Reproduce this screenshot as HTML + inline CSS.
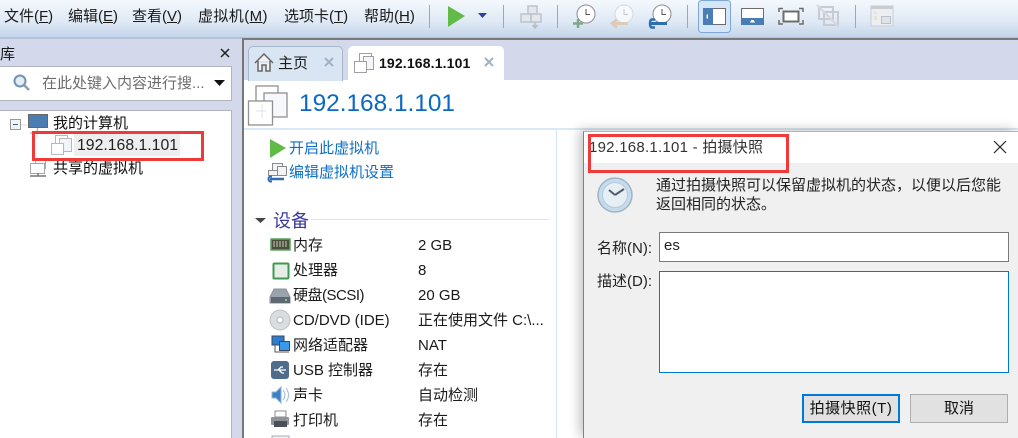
<!DOCTYPE html>
<html><head><meta charset="utf-8">
<style>
html,body{margin:0;padding:0;width:1018px;height:438px;overflow:hidden;background:#d3d9eb}
body{position:relative;font-family:"Liberation Sans","Noto Sans CJK SC",sans-serif;font-size:15px;color:#1a1a1a}
.a{position:absolute;white-space:nowrap;line-height:20px}
.b{position:absolute;box-sizing:border-box}
svg{position:absolute;overflow:visible}
u{text-decoration:underline}
.lnk{color:#0f6fc6}
</style></head><body>
<div class="b" style="left:0;top:0;width:1018px;height:37px;background:linear-gradient(#f4f8fd,#dfe9f5 60%,#c3d4ea)"></div>
<div class="b" style="left:0;top:37px;width:1018px;height:2px;background:#b4c3da"></div>
<div class="b" style="left:243px;top:38px;width:775px;height:2px;background:#7a7a7a"></div>

<span class="a" style="left:4px;top:7px">文件(<u>F</u>)</span>
<span class="a" style="left:68px;top:7px">编辑(<u>E</u>)</span>
<span class="a" style="left:132px;top:7px">查看(<u>V</u>)</span>
<span class="a" style="left:198px;top:7px;letter-spacing:.4px">虚拟机(<u>M</u>)</span>
<span class="a" style="left:284px;top:7px">选项卡(<u>T</u>)</span>
<span class="a" style="left:364px;top:7px">帮助(<u>H</u>)</span>

<!-- toolbar -->
<svg style="left:0;top:0" width="1018" height="38">
<g fill="#8fa9c9"><rect x="429" y="5" width="1" height="23"/><rect x="503" y="5" width="1" height="23"/><rect x="557" y="5" width="1" height="23"/><rect x="687" y="5" width="1" height="23"/><rect x="855" y="5" width="1" height="23"/></g>
<path d="M448 6 L465 16 L448 27Z" fill="#62bb46"/>
<path d="M478 13h9l-4.500 5z" fill="#2b3fa8"/>
<g fill="#e4e8ee" stroke="#bcc3cc" stroke-width="1.500"><rect x="528" y="6" width="9" height="8"/><rect x="521" y="14" width="10" height="8"/><rect x="531" y="14" width="10" height="8"/></g>
<path d="M535 22v5M532.500 25l2.500 3 2.500-3" stroke="#b5bbc4" stroke-width="1.500" fill="none"/>
<g fill="#fff"><circle cx="586" cy="14" r="9"/><circle cx="624" cy="14" r="9" opacity=".6"/><circle cx="662" cy="14" r="9"/></g>
<g fill="none" stroke="#8b8b8b" stroke-width="1"><circle cx="586" cy="14" r="9"/><circle cx="662" cy="14" r="9"/><path d="M586 9v5.500h4M662 9v5.500h4" stroke="#555"/></g>
<g fill="none" stroke="#d5d8dc" stroke-width="1"><circle cx="624" cy="14" r="9"/><path d="M624 9v5.500h4" stroke="#c2c5ca"/></g>
<path d="M578 19v9M573 23.500h10" stroke="#7ea58d" stroke-width="2.500"/>
<path d="M612 23.500h16M617 19.500l-5 4 5 4" fill="none" stroke="#dccbb9" stroke-width="3"/>
<path d="M651 23.500h16" stroke="#2f6fb0" stroke-width="3"/>
<path d="M655 19.500h-3.500c-2 1-2 7 0 8h3.500" fill="none" stroke="#2f6fb0" stroke-width="2.500"/>
<rect x="698.500" y="0.500" width="32" height="32" rx="3" fill="#d5e6f8" stroke="#7fa7d6"/>
<rect x="703.500" y="8.500" width="22" height="16" fill="#fff" stroke="#6c6c6c"/>
<rect x="703" y="8" width="10" height="17" fill="#4a7db3"/>
<path d="M708 14v5l-1.500-1v-3z" fill="#fff"/>
<rect x="741.500" y="8.500" width="22" height="16" fill="#fff" stroke="#6c6c6c"/>
<rect x="741" y="18" width="23" height="7" fill="#4a7db3"/>
<path d="M750 22.500h5v-1h-1v-1.500h-3v1.500h-1z" fill="#fff"/>
<rect x="783.500" y="11.500" width="15" height="10" fill="#fff" stroke="#6c6c6c" stroke-width="2"/>
<path d="M779 12V8.500h4M799 8.500h4V12M779 20v4h4M799 24h4v-4" fill="none" stroke="#6c6c6c" stroke-width="1.500"/>
<g fill="none" stroke="#c8ccd2" stroke-width="2"><rect x="819" y="7" width="14" height="12"/><rect x="824" y="12" width="14" height="13"/></g>
<path d="M817 5l22 22" stroke="#d5d8dd" stroke-width="2"/>
<rect x="871" y="6" width="22" height="20" fill="#eceef2" stroke="#c9cdd3" stroke-width="1"/>
<rect x="871" y="6" width="22" height="3" fill="#c9cdd3"/>
<rect x="881.500" y="16.500" width="9" height="7" fill="#dfe4ea" stroke="#b9c0c9"/>
<path d="M874 13h3M874 17h3M874 19h3" stroke="#e0dcb8" stroke-width="1"/>
</svg>

<!-- library -->
<span class="a" style="left:0;top:45px">库</span>
<svg style="left:0;top:0" width="240" height="120">
<path d="M221 49l8 8M229 49l-8 8" stroke="#222" stroke-width="1.500"/>
</svg>
<div class="b" style="left:0;top:66px;width:232px;height:35px;background:#fff;border:1px solid #b0b4bc;border-left:0"></div>
<svg style="left:0;top:0" width="240" height="105">
<circle cx="20" cy="81" r="5.500" fill="#e4edf6" stroke="#6f93b6" stroke-width="2"/>
<path d="M24 85l5 5" stroke="#8d9aa8" stroke-width="2.500"/>
<path d="M214 80h11l-5.500 6z" fill="#111"/>
</svg>
<span class="a" style="left:42px;top:74px;color:#6d6d6d">在此处键入内容进行搜...</span>
<div class="b" style="left:0;top:110px;width:232px;height:328px;background:#fff;border:1px solid #b0b4bc;border-left:0;border-bottom:0"></div>

<svg style="left:0;top:0" width="240" height="200">
<rect x="10.500" y="119.500" width="10" height="10" fill="#f2f4f7" stroke="#999"/>
<path d="M13 124.500h5" stroke="#3b5e8c"/>
<rect x="28.500" y="114.500" width="19" height="13" fill="#4b7db3" stroke="#666"/>
<path d="M37.500 128v5M30 133h15" stroke="#bbb" stroke-width="1.500"/>
<path d="M21 125h6M37 133v5" stroke="#ddd"/>
<g fill="#fff" stroke="#b8b8b8"><rect x="55.500" y="135.500" width="12" height="12"/><rect x="59.500" y="138.500" width="12" height="13" fill="#f1f4f8"/><rect x="51.500" y="143.500" width="12" height="11"/></g>
<g fill="#fff" stroke="#a8a8a8"><rect x="35.500" y="158.500" width="10" height="10"/><rect x="30.500" y="163.500" width="14" height="10"/></g>
<path d="M30 176h16M38 173v3" stroke="#777" stroke-width="1.500"/>
</svg>
<span class="a" style="left:53px;top:114px;color:#111">我的计算机</span>
<div class="b" style="left:74px;top:134px;width:106px;height:22px;background:#eeeeee"></div>
<span class="a" style="left:77px;top:136px;font-size:15.800px;color:#222">192.168.1.101</span>
<span class="a" style="left:53px;top:159px;color:#111">共享的虚拟机</span>

<!-- main panel -->
<div class="b" style="left:242px;top:38px;width:2px;height:400px;background:#777"></div>
<div class="b" style="left:244px;top:80px;width:774px;height:358px;background:#fff"></div>
<div class="b" style="left:248px;top:46px;width:95px;height:35px;background:#dae5f3;border:1px solid #a8b8cc;border-bottom:0;border-radius:5px 5px 0 0"></div>
<div class="b" style="left:348px;top:46px;width:156px;height:35px;background:#fff;border-radius:5px 5px 0 0"></div>
<svg style="left:0;top:0" width="520" height="130">
<path d="M255 63l9-9 9 9M258 61v10h4v-6h4v6h4V61" fill="#f2f2f2" stroke="#666" stroke-width="1.500"/>
<path d="M325 58l8 8M333 58l-8 8" stroke="#9fb3c8" stroke-width="2"/>
<path d="M485 58l8 8M493 58l-8 8" stroke="#9fb3c8" stroke-width="2"/>
<g fill="#fff" stroke="#a0a0a0"><rect x="359.500" y="53.500" width="12" height="12"/><rect x="363.500" y="56.500" width="10" height="13" fill="#f4f6f9"/><rect x="354.500" y="61.500" width="12" height="11"/></g>
<g fill="#fff" stroke="#909090" stroke-width="1.300"><rect x="256" y="86" width="22" height="22"/><rect x="264" y="93" width="23" height="24" fill="#f6f8fb"/><rect x="248.500" y="101" width="24" height="24"/></g>
<path d="M256 111h10M262 104v14" stroke="#dde3ee"/>
</svg>
<span class="a" style="left:278px;top:54px">主页</span>
<span class="a" style="left:379px;top:53px;font-size:14px;font-weight:bold;color:#111;letter-spacing:.15px">192.168.1.101</span>
<span class="a lnk" style="left:299px;top:89px;font-size:24.400px;line-height:30px;color:#0b68c4">192.168.1.101</span>
<div class="b" style="left:244px;top:128px;width:774px;height:2px;background:#dbe8f5"></div>
<div class="b" style="left:556px;top:130px;width:1px;height:308px;background:#d3e3f2"></div>

<svg style="left:0;top:0" width="560" height="438">
<path d="M270 139l16 9-16 10z" fill="#62bb46"/>
<g fill="#f2f4f6" stroke="#8a8a8a"><rect x="272.500" y="163.500" width="10" height="10"/><rect x="277.500" y="166.500" width="9" height="9"/><rect x="268.500" y="170.500" width="9" height="5"/></g>
<path d="M270 179h14" stroke="#2f6fb0" stroke-width="2.500"/>
<path d="M272 176.500h-2c-2 1-2 4 0 5h2" fill="none" stroke="#2f6fb0" stroke-width="2"/>
<path d="M255 218h11l-5.500 5z" fill="#444"/>
<rect x="311" y="219" width="238" height="1" fill="#dfe3e8"/>
<!-- RAM -->
<rect x="271" y="239" width="19" height="11" fill="#4d4d3f" stroke="#5fa55f" stroke-width="1.500"/>
<path d="M274 241v6M277 241v6M280 241v6M283 241v6M286 241v6" stroke="#9fa38c" stroke-width="1.500"/>
<!-- CPU -->
<rect x="273.500" y="263.500" width="15" height="15" rx="1" fill="#e6ece6" stroke="#3e9a52" stroke-width="2"/>
<!-- HDD -->
<path d="M274 289h12l4 8v6h-20v-6z" fill="#9aa2ac" stroke="#8b929a"/>
<rect x="271" y="297" width="19" height="6" fill="#5f6872"/>
<rect x="285" y="299" width="2" height="2" fill="#7fc97f"/>
<!-- CD -->
<circle cx="280" cy="320" r="10" fill="#d9dde0" stroke="#bdc2c6"/>
<circle cx="280" cy="320" r="3" fill="#fff" stroke="#b0b4b8"/>
<!-- net -->
<rect x="272" y="336" width="12" height="9" fill="#2f7bd0" stroke="#3b4a5a"/>
<rect x="279.500" y="341.500" width="10" height="9" fill="#3a9ae8" stroke="#3b4a5a"/>
<path d="M275 345v7h14" fill="none" stroke="#555"/>
<!-- USB -->
<rect x="271" y="361" width="18" height="18" rx="3" fill="#4f6c8c"/>
<path d="M274 370h12M278 370l3-3h2M279 370l3 3h2" fill="none" stroke="#fff" stroke-width="1.300"/>
<!-- sound -->
<path d="M272 392h4l5-5v16l-5-5h-4z" fill="#3d7fc4" stroke="#8fb3d6"/>
<path d="M283 390q4 5 0 10M286 388q5 7 0 14" fill="none" stroke="#9dbbd8"/>
<!-- printer -->
<rect x="275" y="411" width="11" height="6" fill="#fff" stroke="#8c8c8c"/>
<rect x="271" y="417" width="18" height="8" rx="1" fill="#8c939a"/>
<rect x="274" y="421" width="13" height="6" fill="#4a4f55"/>
<rect x="286" y="419" width="2" height="1" fill="#7fc97f"/>
<rect x="272" y="436" width="17" height="6" fill="#eef1f4" stroke="#a7aeb5"/>
</svg>

<span class="a lnk" style="left:289px;top:139px">开启此虚拟机</span>
<span class="a lnk" style="left:289px;top:163px">编辑虚拟机设置</span>
<span class="a" style="left:273px;top:211px;font-size:18px;color:#3a3a9e">设备</span>

<span class="a" style="left:293px;top:236px">内存</span><span class="a" style="left:418px;top:236px">2 GB</span>
<span class="a" style="left:293px;top:261px">处理器</span><span class="a" style="left:418px;top:261px">8</span>
<span class="a" style="left:293px;top:286px;letter-spacing:-.5px">硬盘(SCSI)</span><span class="a" style="left:418px;top:286px">20 GB</span>
<span class="a" style="left:293px;top:311px">CD/DVD (IDE)</span><span class="a" style="left:418px;top:311px">正在使用文件 C:\...</span>
<span class="a" style="left:293px;top:336px">网络适配器</span><span class="a" style="left:418px;top:336px">NAT</span>
<span class="a" style="left:293px;top:361px">USB 控制器</span><span class="a" style="left:418px;top:361px">存在</span>
<span class="a" style="left:293px;top:386px">声卡</span><span class="a" style="left:418px;top:386px">自动检测</span>
<span class="a" style="left:293px;top:411px">打印机</span><span class="a" style="left:418px;top:411px">存在</span>

<!-- dialog -->
<div class="b" style="left:583px;top:131px;width:435px;height:307px;background:#f0f0f0;border-left:1px solid #4a90c8;border-top:1px solid #9cb9d4;box-shadow:-4px -2px 10px rgba(0,0,0,.22)"></div>
<div class="b" style="left:584px;top:132px;width:434px;height:31px;background:#fff"></div>
<span class="a" style="left:589px;top:138px;font-size:15px;color:#333;letter-spacing:.25px">192.168.1.101 - 拍摄快照</span>
<svg style="left:0;top:0" width="1018" height="438">
<path d="M994 141l12 12M1006 141l-12 12" stroke="#222" stroke-width="1.200"/>
<circle cx="615" cy="195" r="17" fill="#c6dcec" stroke="#9fb5c6" stroke-width="1.500"/>
<circle cx="615" cy="195" r="12.500" fill="#e6eff6" stroke="#b4cadb"/>
<path d="M615 195l-6-5M615 195l9-6" stroke="#555d66" stroke-width="2"/>
</svg>
<span class="a" style="left:656px;top:176px;color:#222">通过拍摄快照可以保留虚拟机的状态，以便以后您能</span>
<span class="a" style="left:656px;top:195px;color:#222">返回相同的状态。</span>
<span class="a" style="left:597px;top:239px;color:#222">名称(N):</span>
<div class="b" style="left:659px;top:232px;width:350px;height:30px;background:#fff;border:1px solid #7a7a7a"></div>
<span class="a" style="left:664px;top:236px;color:#222">es</span>
<span class="a" style="left:597px;top:272px;color:#222">描述(D):</span>
<div class="b" style="left:659px;top:271px;width:350px;height:102px;background:#fff;border:1px solid #0078d7"></div>
<div class="b" style="left:802px;top:394px;width:98px;height:29px;background:#e1e1e1;border:2px solid #0078d7"></div>
<span class="a" style="left:802px;top:399px;width:98px;text-align:center;color:#111;letter-spacing:.5px">拍摄快照(T)</span>
<div class="b" style="left:910px;top:394px;width:98px;height:29px;background:#e1e1e1;border:1px solid #adadad"></div>
<span class="a" style="left:910px;top:399px;width:98px;text-align:center;color:#111">取消</span>

<!-- red annotation boxes -->
<div class="b" style="left:32px;top:131px;width:172px;height:30px;border:3px solid #f03a3a"></div>
<div class="b" style="left:588px;top:134px;width:201px;height:39px;border:3px solid #f03a3a"></div>
</body></html>
